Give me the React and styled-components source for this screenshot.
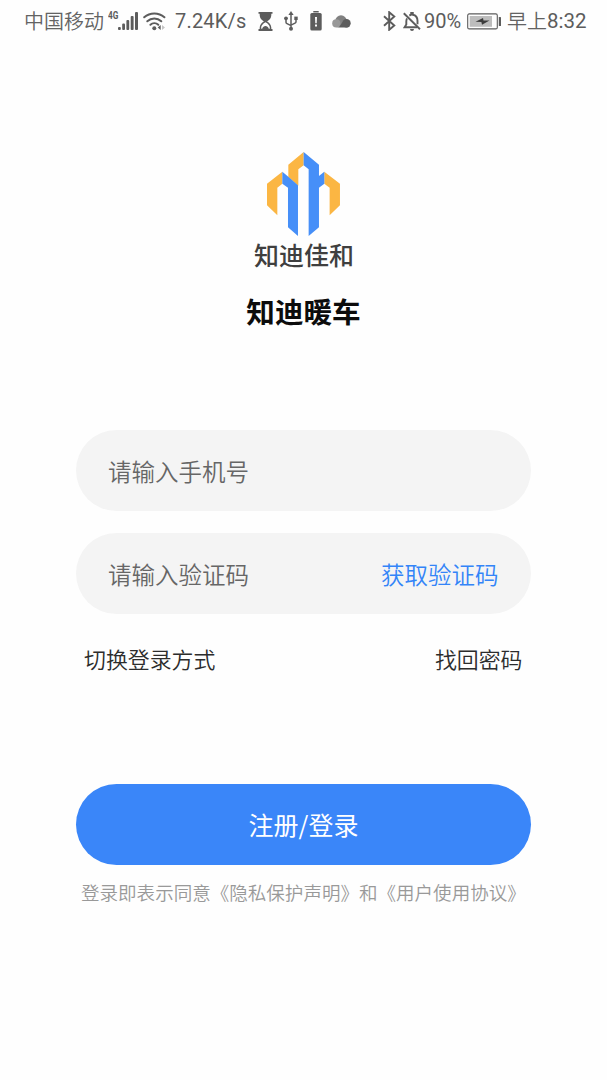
import React, { useState } from 'react'
import styled, { createGlobalStyle } from 'styled-components'

const GlobalStyle = createGlobalStyle`
  * {
    box-sizing: border-box;
  }
  body {
    margin: 0;
    background-color: #fefefe;
    font-family: Roboto, "Noto Sans CJK SC", sans-serif;
  }
`

const Page = styled.div`
  width: 607px;
  height: 1080px;
  overflow: hidden;
  display: flex;
  flex-direction: column;
  align-items: center;
  background-color: #fefefe;
`

const StatusBar = styled.header`
  width: 100%;
  height: 42px;
  padding: 0 20px 0 24px;
  display: flex;
  justify-content: space-between;
  color: #5c5c5c;
`

const StatusGroup = styled.div`
  display: flex;
  align-items: center;
`

const StatusText = styled.span`
  width: ${props => props.$width}px;
  margin-left: ${props => props.$gap || 0}px;
  font-size: ${props => props.$size || 20}px;
  letter-spacing: ${props => props.$spacing || 0}px;
  line-height: 42px;
  white-space: nowrap;
`

const StatusLabel = styled(StatusText)`
  font-family: "Noto Sans CJK SC", sans-serif;
  font-weight: 350;
  color: #636363;
`

const Network = styled.span`
  width: 10px;
  margin-left: 4px;
  align-self: flex-start;
  padding-top: 9px;
  font-size: 11px;
  font-weight: 700;
  line-height: 13px;
  white-space: nowrap;
  transform: scaleX(.75);
  transform-origin: left;
`

const StatusIcon = styled.svg`
  flex: none;
  margin-left: ${props => props.$gap || 0}px;
  fill: #5c5c5c;
`

const Brand = styled.div`
  margin-top: 110px;
  display: flex;
  flex-direction: column;
  align-items: center;
`

const BrandName = styled.div`
  padding-left: 1px;
  font-family: "Noto Sans CJK SC", sans-serif;
  font-size: 25px;
  font-weight: 500;
  line-height: 36px;
  color: #3f3f3f;
`

const Title = styled.h1`
  margin: 19px 0 0;
  font-family: "Noto Sans CJK SC", sans-serif;
  font-size: 28.6px;
  font-weight: 700;
  line-height: 40px;
  color: #0c0c0c;
`

const Form = styled.form`
  width: 455px;
  margin-top: 99px;
  display: flex;
  flex-direction: column;
`

const Field = styled.div`
  height: 81px;
  margin-bottom: 22px;
  padding: 0 32.5px 0 32px;
  display: flex;
  align-items: center;
  justify-content: space-between;
  background-color: #f4f4f4;
  border-radius: 41px;
`

const Input = styled.input`
  flex: 1;
  min-width: 0;
  height: 40px;
  padding: 0;
  border: none;
  outline: none;
  background: transparent;
  font-family: "Noto Sans CJK SC", sans-serif;
  font-size: 23.5px;
  font-weight: 350;
  color: #333;
  &::placeholder {
    color: #666;
    opacity: 1;
  }
`

const CodeBttn = styled.button`
  padding: 0;
  border: none;
  background: transparent;
  font-family: "Noto Sans CJK SC", sans-serif;
  font-size: 23.5px;
  font-weight: 350;
  line-height: 40px;
  color: #3384f8;
`

const Links = styled.div`
  margin-top: 5px;
  padding: 0 8.5px 0 8px;
  display: flex;
  justify-content: space-between;
`

const TextLink = styled.a`
  font-family: "Noto Sans CJK SC", sans-serif;
  font-size: 21.9px;
  font-weight: 350;
  line-height: 36px;
  color: #2c2c2c;
`

const SubmitBttn = styled.button`
  height: 81px;
  margin-top: 107px;
  padding: 0;
  border: none;
  border-radius: 41px;
  background-color: #3a86f9;
  font-family: "Noto Sans CJK SC", sans-serif;
  font-size: 25px;
  line-height: 81px;
  color: #fff;
`

const Agreement = styled.p`
  margin: 13px 0 0 5px;
  font-family: "Noto Sans CJK SC", sans-serif;
  font-size: 18.55px;
  font-weight: 350;
  line-height: 28px;
  white-space: nowrap;
  color: #999;
`

const Signal = () => (
  <StatusIcon width='20' height='18' viewBox='0 0 20 18'>
    <rect x='0' y='15' width='2.8' height='3' rx='1' />
    <rect x='4.2' y='11.5' width='2.8' height='6.5' rx='1' />
    <rect x='8.4' y='8' width='2.8' height='10' rx='1' />
    <rect x='12.7' y='4' width='2.9' height='14' rx='1' />
    <rect x='17' y='0' width='3' height='18' rx='1' />
  </StatusIcon>
)

const Wifi = () => (
  <StatusIcon $gap={5} width='23' height='19' viewBox='0 0 23 19'>
    <g fill='none' stroke='#5c5c5c' strokeWidth='2' strokeLinecap='round'>
      <path d='M1.2 5.3C7 .1 15.6 .1 21.4 5.3' />
      <path d='M4.3 9.2c4-3.7 10-3.7 14 0' />
      <path d='M7.4 12.8c2.3-2.1 5.6-2.1 7.9 0' />
    </g>
    <circle cx='11.3' cy='16.2' r='2' />
    <path d='M17.7 13v5l-3-2.5z' />
    <path d='M19 13v5l3-2.5z' fill='#c4c4c4' />
  </StatusIcon>
)

const Hourglass = () => (
  <StatusIcon $gap={11} width='15' height='19' viewBox='0 0 15 19'>
    <path d='M.5 0h14v1.8h-1.2v1.5c0 3-2 4.8-4.2 6.1 2.2 1.3 4.2 3.2 4.2 6.2v1.5h1.2V19H.5v-1.9h1.2v-1.5c0-3 2-4.9 4.2-6.2C3.7 8.1 1.7 6.3 1.7 3.3V1.8H.5z' />
    <path d='M7.5 10.2c-2.5 1.4-4.3 3.2-4.3 5.3v1.3h1c.6-1.7 1.8-2.7 3.3-2.7s2.7 1 3.3 2.7h1v-1.3c0-2.1-1.8-3.9-4.3-5.3z' fill='#fefefe' />
  </StatusIcon>
)

const Usb = () => (
  <StatusIcon $gap={11} width='14' height='20' viewBox='0 0 14 20'>
    <g fill='none' stroke='#5c5c5c' strokeWidth='1.5'>
      <path d='M7 3v14M2 8v3.2q0 1 1 1.5l4 2M12 8v2.7q0 1-1 1.5l-4 2' />
    </g>
    <path d='M7 0l2.6 4H4.4z' />
    <circle cx='2' cy='7.3' r='1.9' />
    <rect x='10.3' y='5.6' width='3.4' height='3.4' />
    <circle cx='7' cy='17.7' r='2' />
  </StatusIcon>
)

const BatteryAlert = () => (
  <StatusIcon $gap={12} width='12' height='20' viewBox='0 0 12 20'>
    <rect x='3.3' y='0' width='5.4' height='1.5' />
    <rect x='.3' y='2' width='11.4' height='17.6' rx='1.5' />
    <path d='M5 6h2l-.3 6.2H5.3zM5 13.6h2v2H5z' fill='#fefefe' />
  </StatusIcon>
)

const Cloud = () => (
  <StatusIcon $gap={10} width='19' height='13' viewBox='0 0 19 13'>
    <circle cx='9' cy='6' r='5.7' fill='#808080' />
    <circle cx='14.5' cy='8.3' r='4.2' fill='#5c5c5c' />
    <circle cx='4.3' cy='8.4' r='4.1' fill='#989898' />
    <path d='M4.3 12.5c3 0 4-2 5.2-4 1.5-2 3.500-2.500 5.500-1.500l2.500 4.500q-1.300 1-3 1z' fill='#5c5c5c' />
  </StatusIcon>
)

const Bluetooth = () => (
  <StatusIcon width='13' height='20' viewBox='0 0 13 20'>
    <path d='M1 5.2l10.3 9.3-5.1 4.3V1.2l5.1 4.3L1 14.8' fill='none' stroke='#5c5c5c' strokeWidth='1.9' />
  </StatusIcon>
)

const BellOff = () => (
  <StatusIcon $gap={7} width='18' height='19' viewBox='0 0 18 19'>
    <g fill='none' stroke='#5c5c5c' strokeWidth='1.9'>
      <path d='M.8 1.2l16.200 16' />
      <path d='M4 6.300c-.5 1-.7 2-.7 3.200v3L1.500 15.300h12.500M6.300 3.500L8.200 2.700V1h1.600v1.700c3 .6 4.700 3 4.700 6v3.500' />
    </g>
    <path d='M7 16.900h4a2 2 0 0 1-4 0z' />
  </StatusIcon>
)

const Battery = () => (
  <StatusIcon $gap={4} width='35' height='17' viewBox='0 0 35 17'>
    <rect x='.7' y='.9' width='29.6' height='15' rx='1.5' fill='#fefefe' stroke='#5c5c5c' strokeWidth='1.1' />
    <rect x='2.7' y='3' width='22.3' height='10.8' fill='#bdbdbd' />
    <path d='M8.500 8.800l7.500-3.800.5 2.500h6l-7.500 4.300-.6-2.700z' fill='#3c3c3c' />
    <rect x='31.8' y='4' width='2.2' height='9' rx='.6' />
  </StatusIcon>
)

const Logo = () => (
  <svg width='73.3' height='84' viewBox='96 36 220 252'>
    <g fill='#fbb643'>
      <path d='M142 95L96 131v65l31 30v-83l15-12z' />
      <path d='M206 36l-46 38v37l30 26V88l16-12z' />
      <path d='M268 95l47 36v65l-31 30v-83l-16-12z' />
    </g>
    <g fill='#468ff8'>
      <path d='M142 95l18 15 29 26v152l-30-26V143l-17-12z' />
      <path d='M206 36l46 38v34l16-13v36l-16 12v119l-31 26V88l-15-12z' />
    </g>
  </svg>
)

export default function App () {
  const [phone, setPhone] = useState('')
  const [code, setCode] = useState('')

  return (
    <Page>
      <GlobalStyle />
      <StatusBar>
        <StatusGroup>
          <StatusLabel $width={80}>中国移动</StatusLabel>
          <Network>4G</Network>
          <Signal />
          <Wifi />
          <StatusText $gap={9} $width={72} $spacing={0.2}>7.24K/s</StatusText>
          <Hourglass />
          <Usb />
          <BatteryAlert />
          <Cloud />
        </StatusGroup>
        <StatusGroup>
          <Bluetooth />
          <BellOff />
          <StatusText $gap={3} $width={39}>90%</StatusText>
          <Battery />
          <StatusLabel $gap={5} $width={40}>早上</StatusLabel>
          <StatusText $width={40} $size={20.5}>8:32</StatusText>
        </StatusGroup>
      </StatusBar>
      <Brand>
        <Logo />
        <BrandName>知迪佳和</BrandName>
        <Title>知迪暖车</Title>
      </Brand>
      <Form onSubmit={e => e.preventDefault()}>
        <Field>
          <Input placeholder='请输入手机号' value={phone} onChange={e => setPhone(e.target.value)} />
        </Field>
        <Field>
          <Input placeholder='请输入验证码' value={code} onChange={e => setCode(e.target.value)} />
          <CodeBttn type='button'>获取验证码</CodeBttn>
        </Field>
        <Links>
          <TextLink>切换登录方式</TextLink>
          <TextLink>找回密码</TextLink>
        </Links>
        <SubmitBttn type='submit'>注册/登录</SubmitBttn>
        <Agreement>登录即表示同意《隐私保护声明》和《用户使用协议》</Agreement>
      </Form>
    </Page>
  )
}
